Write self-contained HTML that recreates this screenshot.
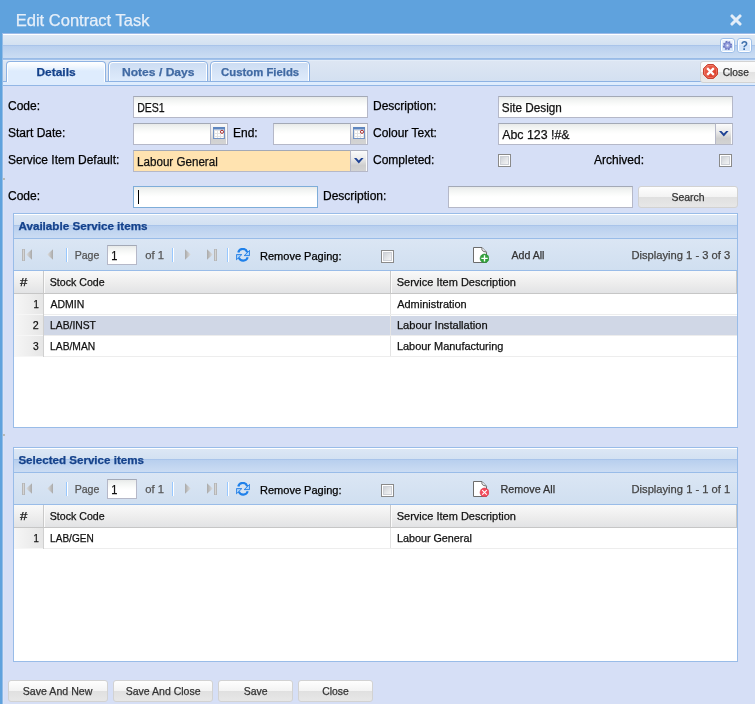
<!DOCTYPE html>
<html>
<head>
<meta charset="utf-8">
<title>Edit Contract Task</title>
<style>
*{box-sizing:border-box;margin:0;padding:0}
html,body{width:755px;height:704px;overflow:hidden}
body{position:relative;background:#5fa2dd;font-family:"Liberation Sans",sans-serif;font-size:12px;color:#000}
#w{position:absolute;left:0;top:0;width:755px;height:704px;will-change:transform}
.a{position:absolute}
.t{position:absolute;white-space:pre;line-height:14px;transform-origin:0 0;-webkit-text-stroke:0.25px}
.inp{border:1px solid #b5b8c8;border-top-color:#a3a9b6;background:#fff linear-gradient(#e8eae9 0,#f1f3f2 3px,#fafbfa 7px,#fff 10px) no-repeat}
.trig{border:1px solid #b5b8c8;border-left:0;border-top-color:#a9adba;box-shadow:inset -1px 1px 0 #fbfbfb}
.trig.date{background:linear-gradient(#fafafa 0,#ececec 35%,#d6d6d6 72%,#d0d0d0 73%,#d4d4d4 100%)}
.trig.combo{background:linear-gradient(#fbfbfb 0,#ebebeb 38%,#cecece 72%,#d3d3d3 100%)}
.btn{border:1px solid #d2d2d2;border-radius:3px;background:linear-gradient(#fefefe 0,#f3f3f3 10px,#e0e0e0 10px,#e7e7e7 100%)}
.chk{border:1px solid #8a8a8a;background:linear-gradient(135deg,#c9cdd2 12%,#e2e4e7 50%,#f7f7f7 88%);box-shadow:inset 0 0 0 1px #fff,inset 0 0 0 2px #cdd0d6}
.tsep{width:2px;height:14px;border-left:1px solid #98c8ff;border-right:1px solid #fff}

</style>
</head>
<body>
<div id="w">
<span class="t" style="left:15px;top:13px;font-size:16.5px;color:#e6eff9;transform:translateX(0.71px) scaleX(1.0011);">Edit Contract Task</span>
<svg class="a" style="left:730px;top:14px" width="12" height="12" viewBox="0 0 12 12"><path d="M2 2 L10 10 M10 2 L2 10" stroke="#e4eef9" stroke-width="3.1" stroke-linecap="round" fill="none"/></svg>
<div class="a" style="left:2px;top:33px;width:753px;height:1px;background:#9dbbe8"></div>
<div class="a" style="left:2px;top:34px;width:1px;height:670px;background:#93bce7"></div>
<div class="a" style="left:3px;top:34px;width:752px;height:670px;background:#d6dff6"></div>
<div class="a" style="left:3px;top:86px;width:1px;height:618px;background:#dbe3f6"></div>
<div class="a" style="left:3px;top:178px;width:2px;height:2px;background:#b9b9b4"></div>
<div class="a" style="left:3px;top:434px;width:2px;height:2px;background:#b9b9b4"></div>
<div class="a" style="left:3px;top:34px;width:752px;height:1px;background:#fff"></div>
<div class="a" style="left:3px;top:35px;width:752px;height:10px;background:linear-gradient(#dfe9f5,#d3e1f1)"></div>
<div class="a" style="left:3px;top:45px;width:752px;height:1px;background:#a9c4ea"></div>
<div class="a" style="left:3px;top:46px;width:752px;height:12px;background:linear-gradient(#b8cfee,#cbddf3)"></div>
<div class="a" style="left:3px;top:58px;width:752px;height:1px;background:#98bbe7"></div>
<div class="a" style="left:3px;top:59px;width:752px;height:1px;background:#a3c2ea"></div>
<div class="a" style="left:3px;top:60px;width:752px;height:21px;background:linear-gradient(#e3ecf8 0,#e3ecf8 1px,#dde6f3 1px,#d3e0f1 100%)"></div>
<div class="a" style="left:3px;top:81px;width:752px;height:1px;background:#8db2e3"></div>
<div class="a" style="left:3px;top:82px;width:752px;height:3px;background:#deecfd"></div>
<div class="a" style="left:3px;top:85px;width:752px;height:1px;background:#92b6e5"></div>
<div class="a" style="left:720px;top:38px;width:15px;height:15px;border:1px solid #9dbfe9;border-radius:3px;background:#fff"><div class="a" style="left:1px;top:1px;width:11px;height:11px;background:linear-gradient(#edf3fc 0,#e1ecfa 50%,#d2e4fa 50%,#d8e8fb 100%)"></div><svg class="a" style="left:1px;top:1px" width="11" height="11" viewBox="0 0 11 11"><g transform="translate(5.5 5.5)"><circle r="3.9" fill="none" stroke="#6a74bf" stroke-width="1.5" stroke-dasharray="1.75 1.31" transform="rotate(10)"/><circle r="3.3" fill="#949edc" stroke="#6a74bf" stroke-width="0.8"/><circle r="1.0" fill="#eef1fb" stroke="#c5cbee" stroke-width="0.6"/></g></svg></div>
<div class="a" style="left:737px;top:38px;width:15px;height:15px;border:1px solid #9dbfe9;border-radius:3px;background:#fff"><div class="a" style="left:1px;top:1px;width:11px;height:11px;background:linear-gradient(#edf3fc 0,#e1ecfa 50%,#d2e4fa 50%,#d8e8fb 100%)"></div><div class="a" style="left:0;top:1px;width:13px;text-align:center;font-weight:bold;font-size:12px;line-height:13px;color:#3d70ad">?</div></div>
<div class="a" style="left:6px;top:61px;width:100px;height:24px;border:1px solid #8db2e3;border-bottom:0;border-radius:4px 4px 0 0;background:linear-gradient(#fff 0,#f3f8fe 4px,#deecfd 9px,#deecfd 100%);box-shadow:inset 1px 1px 0 #fff,inset -1px 0 0 #fff"></div>
<div class="a" style="left:6px;top:82px;width:100px;height:3px;background:#deecfd"></div>
<div class="a" style="left:3px;top:81px;width:3px;height:1px;background:#8db2e3"></div>
<div class="a" style="left:108px;top:61px;width:100px;height:21px;border:1px solid #8db2e3;border-radius:4px 4px 0 0;background:linear-gradient(#cbdcf3 0,#d6e4f7 50%,#deebfc 100%);box-shadow:inset 1px 1px 0 #fff,inset -1px 0 0 #fff"></div>
<div class="a" style="left:210px;top:61px;width:100px;height:21px;border:1px solid #8db2e3;border-radius:4px 4px 0 0;background:linear-gradient(#cbdcf3 0,#d6e4f7 50%,#deebfc 100%);box-shadow:inset 1px 1px 0 #fff,inset -1px 0 0 #fff"></div>
<span class="t" style="left:36px;top:65px;font-size:11px;color:#15428b;font-weight:700;transform:translateX(0.44px) scaleX(1.0871);">Details</span>
<span class="t" style="left:121px;top:65px;font-size:11px;color:#416aa3;font-weight:700;transform:translateX(0.93px) scaleX(1.1000);">Notes / Days</span>
<span class="t" style="left:221px;top:65px;font-size:11px;color:#416aa3;font-weight:700;transform:translateX(0.04px) scaleX(1.0305);">Custom Fields</span>
<div class="a" style="left:700px;top:61px;width:60px;height:22px;border:1px solid #d3d3d3;border-radius:3px;background:linear-gradient(#fdfdfd 0,#f6f6f6 10px,#e2e2e2 10px,#ebebeb 100%)"></div>
<svg class="a" style="left:703px;top:64px" width="15" height="15" viewBox="0 0 15 15"><defs><linearGradient id="og" x1="0" y1="0" x2="1" y2="1"><stop offset="0" stop-color="#ee6a55"/><stop offset="1" stop-color="#d8331f"/></linearGradient></defs><path d="M4.6 0.5 H10.4 L14.5 4.6 V10.4 L10.4 14.5 H4.6 L0.5 10.4 V4.6 Z" fill="url(#og)" stroke="#c7412f" stroke-width="1"/><path d="M5 1.5 H10 L13.5 5 V10 L10 13.5 H5 L1.5 10 V5 Z" fill="none" stroke="#f4907f" stroke-opacity="0.7" stroke-width="0.8"/><path d="M5 5 L10 10 M10 5 L5 10" stroke="#fff" stroke-width="2.3" stroke-linecap="square"/></svg>
<span class="t" style="left:722px;top:65px;font-size:11px;color:#333;transform:translateX(0.69px) scaleX(0.9297);">Close</span>
<span class="t" style="left:8px;top:99px;font-size:12px">Code:</span>
<div class="a inp" style="left:133px;top:96px;width:235px;height:22px;"></div>
<span class="t" style="left:137px;top:101px;font-size:12px;color:#111;transform:translateX(0.17px) scaleX(0.8785);">DES1</span>
<span class="t" style="left:373px;top:99px;font-size:12px">Description:</span>
<div class="a inp" style="left:498px;top:96px;width:235px;height:22px;"></div>
<span class="t" style="left:501px;top:101px;font-size:12px;color:#111;transform:translateX(0.81px) scaleX(0.9785);">Site Design</span>
<span class="t" style="left:8px;top:126px;font-size:12px">Start Date:</span>
<div class="a inp" style="left:133px;top:123px;width:78px;height:22px;"></div>
<div class="a trig date" style="left:211px;top:123px;width:17px;height:22px"></div>
<svg class="a" style="left:213px;top:127px" width="12" height="12" viewBox="0 0 12 12"><rect x="0.5" y="0.5" width="11" height="11" fill="#e3e3e3" stroke="#7494c5"/><rect x="0" y="0" width="12" height="2" fill="#5f86bf"/><rect x="1" y="2" width="10" height="1" fill="#a9c0e0"/><g fill="#fff"><rect x="2" y="4" width="2" height="2"/><rect x="5" y="4" width="2" height="2"/><rect x="2" y="7" width="2" height="2"/><rect x="5" y="7" width="2" height="2"/><rect x="8" y="7" width="2" height="2"/><rect x="2" y="10" width="2" height="1"/><rect x="5" y="10" width="2" height="1"/><rect x="8" y="10" width="2" height="1"/></g><circle cx="9" cy="4.8" r="1.55" fill="#fff" stroke="#9e0b0b" stroke-width="0.85"/></svg>
<span class="t" style="left:233px;top:126px;font-size:12px">End:</span>
<div class="a inp" style="left:273px;top:123px;width:78px;height:22px;"></div>
<div class="a trig date" style="left:351px;top:123px;width:17px;height:22px"></div>
<svg class="a" style="left:353px;top:127px" width="12" height="12" viewBox="0 0 12 12"><rect x="0.5" y="0.5" width="11" height="11" fill="#e3e3e3" stroke="#7494c5"/><rect x="0" y="0" width="12" height="2" fill="#5f86bf"/><rect x="1" y="2" width="10" height="1" fill="#a9c0e0"/><g fill="#fff"><rect x="2" y="4" width="2" height="2"/><rect x="5" y="4" width="2" height="2"/><rect x="2" y="7" width="2" height="2"/><rect x="5" y="7" width="2" height="2"/><rect x="8" y="7" width="2" height="2"/><rect x="2" y="10" width="2" height="1"/><rect x="5" y="10" width="2" height="1"/><rect x="8" y="10" width="2" height="1"/></g><circle cx="9" cy="4.8" r="1.55" fill="#fff" stroke="#9e0b0b" stroke-width="0.85"/></svg>
<span class="t" style="left:373px;top:126px;font-size:12px">Colour Text:</span>
<div class="a inp" style="left:498px;top:123px;width:218px;height:22px;"></div>
<div class="a trig combo" style="left:716px;top:123px;width:17px;height:22px"></div>
<svg class="a" style="left:719px;top:131px" width="10" height="6" viewBox="0 0 10 6"><path d="M0 0 H2.4 L4.8 2.4 L7.2 0 H9.6 L4.8 5.4 Z" fill="#1f4394"/></svg>
<span class="t" style="left:502px;top:128px;font-size:12px;color:#111;transform:translateX(0.20px) scaleX(1.0303);">Abc 123 !#&amp;</span>
<span class="t" style="left:8px;top:153px;font-size:12px">Service Item Default:</span>
<div class="a inp" style="left:133px;top:150px;width:218px;height:22px;background:#ffe3b0"></div>
<div class="a trig combo" style="left:351px;top:150px;width:17px;height:22px"></div>
<svg class="a" style="left:354px;top:158px" width="10" height="6" viewBox="0 0 10 6"><path d="M0 0 H2.4 L4.8 2.4 L7.2 0 H9.6 L4.8 5.4 Z" fill="#1f4394"/></svg>
<span class="t" style="left:137px;top:155px;font-size:12px;color:#111;transform:translateX(0.08px) scaleX(0.9673);">Labour General</span>
<span class="t" style="left:373px;top:153px;font-size:12px">Completed:</span>
<div class="a chk" style="left:498px;top:154px;width:13px;height:13px"></div>
<span class="t" style="left:594px;top:153px;font-size:12px">Archived:</span>
<div class="a chk" style="left:719px;top:154px;width:13px;height:13px"></div>
<span class="t" style="left:8px;top:189px;font-size:12px">Code:</span>
<div class="a inp" style="left:133px;top:186px;width:185px;height:22px;border-color:#7eadd9"></div>
<div class="a" style="left:138px;top:190px;width:1px;height:14px;background:#000"></div>
<span class="t" style="left:323px;top:189px;font-size:12px">Description:</span>
<div class="a inp" style="left:448px;top:186px;width:185px;height:22px;"></div>
<div class="a btn" style="left:638px;top:186px;width:100px;height:22px"></div>
<span class="t" style="left:671px;top:190px;font-size:11px;color:#333;transform:translateX(0.47px) scaleX(0.9515);">Search</span>
<div class="a" style="left:13px;top:213px;width:725px;height:215px;border:1px solid #99bce8;background:#fff"></div>
<div class="a" style="left:14px;top:214px;width:723px;height:24px;background:linear-gradient(#fff 0,#fff 1px,#dce7f5 1px,#d3e1f2 11px,#a9c4ea 11px,#a9c4ea 12px,#b8cfee 12px,#cbdcf3 100%)"></div>
<div class="a" style="left:14px;top:238px;width:723px;height:1px;background:#99bce8"></div>
<span class="t" style="left:18px;top:219px;font-size:11px;color:#15428b;font-weight:700;transform:translateX(0.44px) scaleX(1.0592);">Available Service items</span>
<div class="a" style="left:14px;top:239px;width:723px;height:31px;background:linear-gradient(#dbe6f4,#d0dff0)"></div>
<div class="a" style="left:14px;top:270px;width:723px;height:1px;background:#99bce8"></div>
<svg class="a" style="left:22px;top:249px" width="3" height="12" viewBox="0 0 3 12"><rect x="0" y="0" width="3" height="12" fill="#b6b6b6"/><rect x="1" y="0.6" width="1" height="10.8" fill="#d4d4d4"/></svg>
<svg class="a" style="left:26px;top:249px" width="6" height="11" viewBox="0 0 6 11"><defs><linearGradient id="gl" x1="0" y1="0" x2="1" y2="0"><stop offset="0" stop-color="#dedede"/><stop offset="1" stop-color="#a9a9a9"/></linearGradient><linearGradient id="gr" x1="0" y1="0" x2="1" y2="0"><stop offset="0" stop-color="#a9a9a9"/><stop offset="1" stop-color="#dedede"/></linearGradient></defs><path d="M6 0.2 L0.2 5.5 L6 10.8 Z" fill="url(#gl)"/></svg>
<svg class="a" style="left:47px;top:249px" width="6" height="11" viewBox="0 0 6 11"><defs><linearGradient id="gl" x1="0" y1="0" x2="1" y2="0"><stop offset="0" stop-color="#dedede"/><stop offset="1" stop-color="#a9a9a9"/></linearGradient><linearGradient id="gr" x1="0" y1="0" x2="1" y2="0"><stop offset="0" stop-color="#a9a9a9"/><stop offset="1" stop-color="#dedede"/></linearGradient></defs><path d="M6 0.2 L0.2 5.5 L6 10.8 Z" fill="url(#gl)"/></svg>
<div class="a tsep" style="left:66px;top:248px"></div>
<span class="t" style="left:74px;top:248px;font-size:11px;color:#555;transform:translateX(0.63px) scaleX(0.9621);">Page</span>
<div class="a inp" style="left:107px;top:245px;width:30px;height:20px;"></div>
<span class="t" style="left:111px;top:249px;font-size:12px;color:#111;transform:translateX(0.17px) scaleX(0.9231);">1</span>
<span class="t" style="left:145px;top:248px;font-size:11px;color:#555;transform:translateX(0.14px) scaleX(1.0242);">of 1</span>
<div class="a tsep" style="left:172px;top:248px"></div>
<svg class="a" style="left:185px;top:249px" width="6" height="11" viewBox="0 0 6 11"><defs><linearGradient id="gl" x1="0" y1="0" x2="1" y2="0"><stop offset="0" stop-color="#dedede"/><stop offset="1" stop-color="#a9a9a9"/></linearGradient><linearGradient id="gr" x1="0" y1="0" x2="1" y2="0"><stop offset="0" stop-color="#a9a9a9"/><stop offset="1" stop-color="#dedede"/></linearGradient></defs><path d="M0 0.2 L5.8 5.5 L0 10.8 Z" fill="url(#gr)"/></svg>
<svg class="a" style="left:207px;top:249px" width="6" height="11" viewBox="0 0 6 11"><defs><linearGradient id="gl" x1="0" y1="0" x2="1" y2="0"><stop offset="0" stop-color="#dedede"/><stop offset="1" stop-color="#a9a9a9"/></linearGradient><linearGradient id="gr" x1="0" y1="0" x2="1" y2="0"><stop offset="0" stop-color="#a9a9a9"/><stop offset="1" stop-color="#dedede"/></linearGradient></defs><path d="M0 0.2 L5.8 5.5 L0 10.8 Z" fill="url(#gr)"/></svg>
<svg class="a" style="left:214px;top:249px" width="3" height="12" viewBox="0 0 3 12"><rect x="0" y="0" width="3" height="12" fill="#b6b6b6"/><rect x="1" y="0.6" width="1" height="10.8" fill="#d4d4d4"/></svg>
<div class="a tsep" style="left:227px;top:248px"></div>
<svg class="a" style="left:236px;top:248px" width="14" height="15" viewBox="0 0 14 15"><path d="M2.3 4.6 A4.6 4.6 0 0 1 11.2 4.2" fill="none" stroke="#1f80ea" stroke-width="2.2"/><path d="M13.6 2.4 V7.6 H8.2 Z" fill="#a9d3fc" stroke="#1f7be3" stroke-width="0.9" stroke-linejoin="round"/><path d="M11.7 9.2 A4.7 4.7 0 0 1 2.8 9.6" fill="none" stroke="#1f80ea" stroke-width="2.1"/><path d="M0.4 11.8 V6.6 H5.8 Z" fill="#a9d3fc" stroke="#1f7be3" stroke-width="0.9" stroke-linejoin="round"/></svg>
<span class="t" style="left:259px;top:249px;font-size:11px;color:#000;transform:translateX(1.00px) scaleX(1.0017);">Remove Paging:</span>
<div class="a chk" style="left:381px;top:250px;width:13px;height:13px"></div>
<svg class="a" style="left:473px;top:247px" width="16" height="16" viewBox="0 0 16 16"><path d="M0.5 0.5 H9 L13.5 5.2 V15.5 H0.5 Z" fill="#fff" stroke="#6c6c6c" stroke-width="1"/><path d="M9 0.8 Q8 4.6 13.2 5" fill="#f2f2f2" stroke="#6c6c6c" stroke-width="1"/><circle cx="11.5" cy="11.4" r="4.4" fill="#32a23a" stroke="#2a8a35" stroke-width="0.6"/><path d="M11.5 8.2 V14.6 M8.3 11.4 H14.7" stroke="#fff" stroke-width="1.4"/></svg>
<span class="t" style="left:511px;top:248px;font-size:11px;color:#333;transform:translateX(0.40px) scaleX(0.9661);">Add All</span>
<span class="t" style="left:631px;top:248px;font-size:11px;color:#444;transform:translateX(0.49px) scaleX(1.0151);">Displaying 1 - 3 of 3</span>
<div class="a" style="left:14px;top:271px;width:723px;height:22px;background:linear-gradient(#f9f9f9 0,#ececec 60%,#e2e3e5 100%)"></div>
<div class="a" style="left:14px;top:293px;width:723px;height:1px;background:#c6c6c6"></div>
<div class="a" style="left:43px;top:271px;width:1px;height:22px;background:#c9c9c9"></div>
<div class="a" style="left:44px;top:271px;width:1px;height:22px;background:#fbfbfb"></div>
<div class="a" style="left:390px;top:271px;width:1px;height:22px;background:#c9c9c9"></div>
<div class="a" style="left:391px;top:271px;width:1px;height:22px;background:#fbfbfb"></div>
<div class="a" style="left:736px;top:271px;width:1px;height:22px;background:#c9c9c9"></div>
<span class="t" style="left:20px;top:275px;font-size:11px;color:#111;transform:translateX(0.00px) scaleX(1.1967);">#</span>
<span class="t" style="left:49px;top:275px;font-size:11px;color:#111;transform:translateX(0.77px) scaleX(0.9652);">Stock Code</span>
<span class="t" style="left:396px;top:275px;font-size:11px;color:#111;transform:translateX(0.75px) scaleX(0.9993);">Service Item Description</span>
<div class="a" style="left:14px;top:314px;width:723px;height:1px;background:#ededed"></div>
<div class="a" style="left:14px;top:294px;width:29px;height:21px;background:linear-gradient(90deg,#f6f6f6,#e6e6e6);border-bottom:1px solid #f6f6f6"></div>
<div class="a" style="left:43px;top:294px;width:1px;height:21px;background:#d0d0d0"></div>
<div class="a" style="left:390px;top:294px;width:1px;height:20px;background:#e4e4e4"></div>
<span class="t" style="left:33px;top:297px;font-size:11px;color:#111;transform:translateX(0.40px) scaleX(0.8750);">1</span>
<span class="t" style="left:50px;top:297px;font-size:11px;color:#111;transform:translateX(0.50px) scaleX(0.9522);">ADMIN</span>
<span class="t" style="left:397px;top:297px;font-size:11px;color:#111;transform:translateX(0.20px) scaleX(0.9967);">Administration</span>
<div class="a" style="left:14px;top:316px;width:723px;height:19px;background:#d0d7e6"></div>
<div class="a" style="left:14px;top:335px;width:723px;height:1px;background:#ededed"></div>
<div class="a" style="left:14px;top:315px;width:29px;height:21px;background:linear-gradient(90deg,#f6f6f6,#e6e6e6);border-bottom:1px solid #f6f6f6"></div>
<div class="a" style="left:43px;top:315px;width:1px;height:21px;background:#d0d0d0"></div>
<div class="a" style="left:390px;top:315px;width:1px;height:20px;background:#e4e4e4"></div>
<span class="t" style="left:32px;top:318px;font-size:11px;color:#111;transform:translateX(0.87px) scaleX(0.9703);">2</span>
<span class="t" style="left:50px;top:318px;font-size:11px;color:#111;transform:translateX(0.06px) scaleX(0.9375);">LAB/INST</span>
<span class="t" style="left:396px;top:318px;font-size:11px;color:#111;transform:translateX(0.89px) scaleX(1.0099);">Labour Installation</span>
<div class="a" style="left:14px;top:356px;width:723px;height:1px;background:#ededed"></div>
<div class="a" style="left:14px;top:336px;width:29px;height:21px;background:linear-gradient(90deg,#f6f6f6,#e6e6e6);border-bottom:1px solid #f6f6f6"></div>
<div class="a" style="left:43px;top:336px;width:1px;height:21px;background:#d0d0d0"></div>
<div class="a" style="left:390px;top:336px;width:1px;height:20px;background:#e4e4e4"></div>
<span class="t" style="left:33px;top:339px;font-size:11px;color:#111;transform:translateX(0.03px) scaleX(0.9333);">3</span>
<span class="t" style="left:50px;top:339px;font-size:11px;color:#111;transform:translateX(0.06px) scaleX(0.9355);">LAB/MAN</span>
<span class="t" style="left:396px;top:339px;font-size:11px;color:#111;transform:translateX(0.90px) scaleX(0.9948);">Labour Manufacturing</span>
<div class="a" style="left:13px;top:447px;width:725px;height:215px;border:1px solid #99bce8;background:#fff"></div>
<div class="a" style="left:14px;top:448px;width:723px;height:24px;background:linear-gradient(#fff 0,#fff 1px,#dce7f5 1px,#d3e1f2 11px,#a9c4ea 11px,#a9c4ea 12px,#b8cfee 12px,#cbdcf3 100%)"></div>
<div class="a" style="left:14px;top:472px;width:723px;height:1px;background:#99bce8"></div>
<span class="t" style="left:18px;top:453px;font-size:11px;color:#15428b;font-weight:700;transform:translateX(0.38px) scaleX(1.0530);">Selected Service items</span>
<div class="a" style="left:14px;top:473px;width:723px;height:31px;background:linear-gradient(#dbe6f4,#d0dff0)"></div>
<div class="a" style="left:14px;top:504px;width:723px;height:1px;background:#99bce8"></div>
<svg class="a" style="left:22px;top:483px" width="3" height="12" viewBox="0 0 3 12"><rect x="0" y="0" width="3" height="12" fill="#b6b6b6"/><rect x="1" y="0.6" width="1" height="10.8" fill="#d4d4d4"/></svg>
<svg class="a" style="left:26px;top:483px" width="6" height="11" viewBox="0 0 6 11"><defs><linearGradient id="gl" x1="0" y1="0" x2="1" y2="0"><stop offset="0" stop-color="#dedede"/><stop offset="1" stop-color="#a9a9a9"/></linearGradient><linearGradient id="gr" x1="0" y1="0" x2="1" y2="0"><stop offset="0" stop-color="#a9a9a9"/><stop offset="1" stop-color="#dedede"/></linearGradient></defs><path d="M6 0.2 L0.2 5.5 L6 10.8 Z" fill="url(#gl)"/></svg>
<svg class="a" style="left:47px;top:483px" width="6" height="11" viewBox="0 0 6 11"><defs><linearGradient id="gl" x1="0" y1="0" x2="1" y2="0"><stop offset="0" stop-color="#dedede"/><stop offset="1" stop-color="#a9a9a9"/></linearGradient><linearGradient id="gr" x1="0" y1="0" x2="1" y2="0"><stop offset="0" stop-color="#a9a9a9"/><stop offset="1" stop-color="#dedede"/></linearGradient></defs><path d="M6 0.2 L0.2 5.5 L6 10.8 Z" fill="url(#gl)"/></svg>
<div class="a tsep" style="left:66px;top:482px"></div>
<span class="t" style="left:74px;top:482px;font-size:11px;color:#555;transform:translateX(0.63px) scaleX(0.9621);">Page</span>
<div class="a inp" style="left:107px;top:479px;width:30px;height:20px;"></div>
<span class="t" style="left:111px;top:483px;font-size:12px;color:#111;transform:translateX(0.17px) scaleX(0.9231);">1</span>
<span class="t" style="left:145px;top:482px;font-size:11px;color:#555;transform:translateX(0.14px) scaleX(1.0242);">of 1</span>
<div class="a tsep" style="left:172px;top:482px"></div>
<svg class="a" style="left:185px;top:483px" width="6" height="11" viewBox="0 0 6 11"><defs><linearGradient id="gl" x1="0" y1="0" x2="1" y2="0"><stop offset="0" stop-color="#dedede"/><stop offset="1" stop-color="#a9a9a9"/></linearGradient><linearGradient id="gr" x1="0" y1="0" x2="1" y2="0"><stop offset="0" stop-color="#a9a9a9"/><stop offset="1" stop-color="#dedede"/></linearGradient></defs><path d="M0 0.2 L5.8 5.5 L0 10.8 Z" fill="url(#gr)"/></svg>
<svg class="a" style="left:207px;top:483px" width="6" height="11" viewBox="0 0 6 11"><defs><linearGradient id="gl" x1="0" y1="0" x2="1" y2="0"><stop offset="0" stop-color="#dedede"/><stop offset="1" stop-color="#a9a9a9"/></linearGradient><linearGradient id="gr" x1="0" y1="0" x2="1" y2="0"><stop offset="0" stop-color="#a9a9a9"/><stop offset="1" stop-color="#dedede"/></linearGradient></defs><path d="M0 0.2 L5.8 5.5 L0 10.8 Z" fill="url(#gr)"/></svg>
<svg class="a" style="left:214px;top:483px" width="3" height="12" viewBox="0 0 3 12"><rect x="0" y="0" width="3" height="12" fill="#b6b6b6"/><rect x="1" y="0.6" width="1" height="10.8" fill="#d4d4d4"/></svg>
<div class="a tsep" style="left:227px;top:482px"></div>
<svg class="a" style="left:236px;top:482px" width="14" height="15" viewBox="0 0 14 15"><path d="M2.3 4.6 A4.6 4.6 0 0 1 11.2 4.2" fill="none" stroke="#1f80ea" stroke-width="2.2"/><path d="M13.6 2.4 V7.6 H8.2 Z" fill="#a9d3fc" stroke="#1f7be3" stroke-width="0.9" stroke-linejoin="round"/><path d="M11.7 9.2 A4.7 4.7 0 0 1 2.8 9.6" fill="none" stroke="#1f80ea" stroke-width="2.1"/><path d="M0.4 11.8 V6.6 H5.8 Z" fill="#a9d3fc" stroke="#1f7be3" stroke-width="0.9" stroke-linejoin="round"/></svg>
<span class="t" style="left:259px;top:483px;font-size:11px;color:#000;transform:translateX(1.00px) scaleX(1.0017);">Remove Paging:</span>
<div class="a chk" style="left:381px;top:484px;width:13px;height:13px"></div>
<svg class="a" style="left:473px;top:481px" width="16" height="16" viewBox="0 0 16 16"><path d="M0.5 0.5 H9 L13.5 5.2 V15.5 H0.5 Z" fill="#fff" stroke="#6c6c6c" stroke-width="1"/><path d="M9 0.8 Q8 4.6 13.2 5" fill="#f2f2f2" stroke="#6c6c6c" stroke-width="1"/><circle cx="11.5" cy="11.4" r="4.4" fill="#f44a5b" stroke="#d43a4a" stroke-width="0.6"/><path d="M9.2 9.1 L13.8 13.7 M13.8 9.1 L9.2 13.7" stroke="#fff" stroke-width="1.1"/></svg>
<span class="t" style="left:500px;top:482px;font-size:11px;color:#333;transform:translateX(0.52px) scaleX(0.9808);">Remove All</span>
<span class="t" style="left:631px;top:482px;font-size:11px;color:#444;transform:translateX(0.49px) scaleX(1.0157);">Displaying 1 - 1 of 1</span>
<div class="a" style="left:14px;top:505px;width:723px;height:22px;background:linear-gradient(#f9f9f9 0,#ececec 60%,#e2e3e5 100%)"></div>
<div class="a" style="left:14px;top:527px;width:723px;height:1px;background:#c6c6c6"></div>
<div class="a" style="left:43px;top:505px;width:1px;height:22px;background:#c9c9c9"></div>
<div class="a" style="left:44px;top:505px;width:1px;height:22px;background:#fbfbfb"></div>
<div class="a" style="left:390px;top:505px;width:1px;height:22px;background:#c9c9c9"></div>
<div class="a" style="left:391px;top:505px;width:1px;height:22px;background:#fbfbfb"></div>
<div class="a" style="left:736px;top:505px;width:1px;height:22px;background:#c9c9c9"></div>
<span class="t" style="left:20px;top:509px;font-size:11px;color:#111;transform:translateX(0.00px) scaleX(1.1967);">#</span>
<span class="t" style="left:49px;top:509px;font-size:11px;color:#111;transform:translateX(0.77px) scaleX(0.9652);">Stock Code</span>
<span class="t" style="left:396px;top:509px;font-size:11px;color:#111;transform:translateX(0.75px) scaleX(0.9993);">Service Item Description</span>
<div class="a" style="left:14px;top:548px;width:723px;height:1px;background:#ededed"></div>
<div class="a" style="left:14px;top:528px;width:29px;height:21px;background:linear-gradient(90deg,#f6f6f6,#e6e6e6);border-bottom:1px solid #f6f6f6"></div>
<div class="a" style="left:43px;top:528px;width:1px;height:21px;background:#d0d0d0"></div>
<div class="a" style="left:390px;top:528px;width:1px;height:20px;background:#e4e4e4"></div>
<span class="t" style="left:33px;top:531px;font-size:11px;color:#111;transform:translateX(0.40px) scaleX(0.8750);">1</span>
<span class="t" style="left:50px;top:531px;font-size:11px;color:#111;transform:translateX(0.08px) scaleX(0.9152);">LAB/GEN</span>
<span class="t" style="left:396px;top:531px;font-size:11px;color:#111;transform:translateX(0.92px) scaleX(0.9793);">Labour General</span>
<div class="a btn" style="left:8px;top:680px;width:100px;height:22px"></div>
<span class="t" style="left:22px;top:684px;font-size:11px;color:#333;transform:translateX(0.77px) scaleX(0.9645);">Save And New</span>
<div class="a btn" style="left:113px;top:680px;width:100px;height:22px"></div>
<span class="t" style="left:125px;top:684px;font-size:11px;color:#333;transform:translateX(0.67px) scaleX(0.9569);">Save And Close</span>
<div class="a btn" style="left:218px;top:680px;width:75px;height:22px"></div>
<span class="t" style="left:243px;top:684px;font-size:11px;color:#333;transform:translateX(0.67px) scaleX(0.9522);">Save</span>
<div class="a btn" style="left:298px;top:680px;width:75px;height:22px"></div>
<span class="t" style="left:322px;top:684px;font-size:11px;color:#333;transform:translateX(0.18px) scaleX(0.9445);">Close</span>
</div>
</body>
</html>
